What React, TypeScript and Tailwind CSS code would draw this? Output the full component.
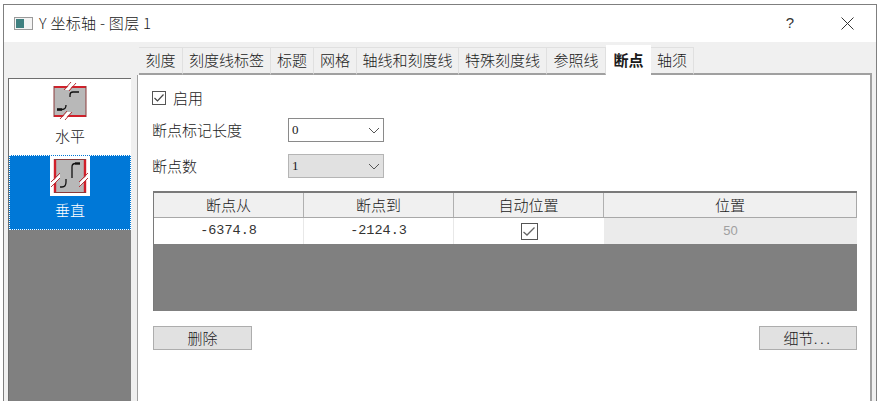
const cjk = "font-['Noto_Sans_CJK_SC',sans-serif]";

const tabs = [
  { label: '刻度', w: 'w-[44px]' },
  { label: '刻度线标签', w: 'w-[88px]' },
  { label: '标题', w: 'w-[43px]' },
  { label: '网格', w: 'w-[43px]' },
  { label: '轴线和刻度线', w: 'w-[102px]' },
  { label: '特殊刻度线', w: 'w-[88px]' },
  { label: '参照线', w: 'w-[59px]' },
];

const HorizontalIcon = () => (
  <svg width="40" height="40" viewBox="0 0 40 40" className="block">
    <rect x="4" y="5" width="32" height="31" fill="#b8b8b8" />
    <path d="M4 6H36M4 35H36" stroke="#d0202a" strokeWidth="2" />
    <path d="M4 5V36M36 5V36" stroke="#8a3a3a" strokeWidth="1" />
    {/* axis break on top and bottom edge */}
    <path d="M15 9L21 2L25 2L19 9Z" fill="#ffffff" />
    <path d="M11 38L17 31L21 31L15 38Z" fill="#ffffff" />
    <path d="M14 9L21 1M19 10L26 2M10 38L17 30M15 39L22 31" stroke="#b5343a" strokeWidth="1" fill="none" />
    <path d="M20 16V14C20 12 21 11 23 11H29" stroke="#111111" strokeWidth="1.3" fill="none" />
    <path d="M7 28.5H12C15 28.5 16 27 16 24" stroke="#111111" strokeWidth="1.3" fill="none" />
    <path d="M7 28.5H12" stroke="#111111" strokeWidth="2.5" fill="none" />
  </svg>
);

const VerticalIcon = () => (
  <svg width="40" height="40" viewBox="0 0 40 40" className="block">
    <rect x="4" y="3" width="32" height="34" fill="#b8b8b8" />
    <path d="M5 3V37M35 3V37" stroke="#d0202a" strokeWidth="2.4" />
    <path d="M4 3.5H36M4 36.5H36" stroke="#8a3a3a" strokeWidth="1" />
    {/* axis break on left and right edge */}
    <path d="M2 26L10 18L10 22L2 30Z" fill="#ffffff" />
    <path d="M30 26L38 18L38 22L30 30Z" fill="#ffffff" />
    <path d="M1 26L10 17M1 31L10 22M29 26L38 17M29 31L38 22" stroke="#b5343a" strokeWidth="1" fill="none" />
    <path d="M22 22V11C22 8.5 23.5 7.5 25.5 7.5H30" stroke="#111111" strokeWidth="1.3" fill="none" />
    <path d="M25 7.5H30" stroke="#111111" strokeWidth="2.2" fill="none" />
    <path d="M10 31H12C15 31 16 29 16 26V23" stroke="#111111" strokeWidth="1.3" fill="none" />
  </svg>
);

const Select = ({ value, disabled }: { value: string; disabled?: boolean }) => (
  <div
    className={`w-[96px] h-[24px] border flex items-center justify-between pl-[3px] pr-[3px] font-['Liberation_Serif',serif] text-[13px] ${
      disabled ? 'bg-[#e1e1e1] border-[#b5b5b5]' : 'bg-white border-[#8a8a8a]'
    }`}
  >
    <span>{value}</span>
    <svg width="12" height="7" viewBox="0 0 12 7" fill="none" stroke="#555555" strokeWidth="1">
      <path d="M1 1L6 6L11 1" />
    </svg>
  </div>
);

export default function App() {
  return (
    <div className={`w-[884px] h-[401px] overflow-hidden bg-white pl-[3px] pt-[4px] pr-[7px] text-[#1a1a1a] ${cjk}`}>
      <div className="h-[397px] border-l border-t border-r border-[#7f7f7f] flex flex-col">
        {/* title bar */}
        <div className="h-[37px] shrink-0 bg-white flex items-center pl-[10px]">
          <div className="w-[19px] h-[13px] border border-[#9a9a9a] bg-[#f4f4f4] pl-[1px] py-[1px] mr-[6px]">
            <div className="w-[8px] h-full bg-[#3f8080]" />
          </div>
          <span className="text-[15px] font-light tracking-[0.3px]">Y 坐标轴 - 图层 1</span>
          <span className="ml-auto text-[15px] font-['Liberation_Sans',sans-serif] mr-[47px] text-[#333333]">?</span>
          <svg width="13" height="13" viewBox="0 0 13 13" stroke="#333333" strokeWidth="1" className="mr-[22px]">
            <path d="M0.5 0.5L12.5 12.5M12.5 0.5L0.5 12.5" />
          </svg>
        </div>

        <div className="flex-1 min-h-0 bg-[#f0f0f0] flex pl-[4px] pr-[4px]">
          {/* left list */}
          <div className="w-[123px] shrink-0 mt-[36px] border-l border-t border-[#6e6e6e] flex flex-col bg-[#808080]">
            <div className="h-[76px] bg-white flex flex-col items-center pt-[2px]">
              <HorizontalIcon />
              <span className="text-[15px] font-light mt-[4px] leading-[22px]">水平</span>
            </div>
            <div className="h-[75px] bg-[#0078d7] border border-dotted border-white flex flex-col items-center">
              <div className="bg-white">
                <VerticalIcon />
              </div>
              <span className="text-[15px] font-light text-white mt-[3px] leading-[22px]">垂直</span>
            </div>
          </div>

          {/* tabs and page */}
          <div className="flex-1 min-w-0 ml-[6px] flex flex-col">
            <div className="h-[33px] shrink-0 flex items-end pl-[2px] relative z-10">
              {tabs.map(t => (
                <div
                  key={t.label}
                  className={`${t.w} h-[28px] flex items-center justify-center text-[15px] font-light border-r border-t border-[#e0e0e0] border-b-2 border-b-[#a0a0a0] whitespace-nowrap`}
                >
                  {t.label}
                </div>
              ))}
              <div className="w-[45px] h-[30px] bg-white flex items-center justify-center text-[15px] font-bold whitespace-nowrap">
                断点
              </div>
              <div className="w-[43px] h-[28px] flex items-center justify-center text-[15px] font-light border-r border-t border-[#e0e0e0] border-b-2 border-b-[#a0a0a0]">
                轴须
              </div>
              <div className="flex-1 h-[2px] bg-[#a0a0a0]" />
            </div>

            <div className="flex-1 min-h-0 bg-white border-l border-r-2 border-[#a0a0a0] pl-[14px] pr-[15px] pt-[15px]">
              <div className="flex items-center h-[16px] gap-[7px]">
                <div className="w-[14px] h-[14px] border border-[#555555] flex items-center justify-center">
                  <svg width="10" height="8" viewBox="0 0 10 8" fill="none" stroke="#444444" strokeWidth="1.2">
                    <path d="M0.5 4L3.5 7L9.5 0.5" />
                  </svg>
                </div>
                <span className="text-[15px] font-light">启用</span>
              </div>

              <div className="flex items-center mt-[12px] h-[24px]">
                <span className="w-[136px] text-[15px] font-light">断点标记长度</span>
                <Select value="0" />
              </div>
              <div className="flex items-center mt-[12px] h-[24px]">
                <span className="w-[136px] text-[15px] font-light">断点数</span>
                <Select value="1" disabled />
              </div>

              {/* table */}
              <div className="mt-[13px] ml-[1px] w-[704px] h-[120px] bg-[#808080] border-t-2 border-l border-[#7a7a7a] flex flex-col">
                <div className="h-[25px] shrink-0 bg-[#f0f0f0] border-b border-[#a8a8a8] flex text-[15px] font-light">
                  <div className="w-[150px] border-r border-[#b0b0b0] flex items-center justify-center">断点从</div>
                  <div className="w-[150px] border-r border-[#b0b0b0] flex items-center justify-center">断点到</div>
                  <div className="w-[150px] border-r border-[#b0b0b0] flex items-center justify-center">自动位置</div>
                  <div className="flex-1 border-r border-[#a8a8a8] flex items-center justify-center">位置</div>
                </div>
                <div className="h-[26px] shrink-0 flex bg-white text-[14px]">
                  <div className="w-[150px] border-r border-[#e8e8e8] flex items-center justify-center font-['Liberation_Mono',monospace] text-[13.5px] text-[#333333]">-6374.8</div>
                  <div className="w-[150px] border-r border-[#e8e8e8] flex items-center justify-center font-['Liberation_Mono',monospace] text-[13.5px] text-[#333333]">-2124.3</div>
                  <div className="w-[150px] flex items-center justify-center">
                    <div className="w-[17px] h-[17px] border border-[#555555] flex items-center justify-center">
                      <svg width="12" height="9" viewBox="0 0 12 9" fill="none" stroke="#666666" strokeWidth="1.3">
                        <path d="M0.5 5L4 8L11.5 0.5" />
                      </svg>
                    </div>
                  </div>
                  <div className="flex-1 bg-[#ebebeb] text-[#a0a0a0] text-[13px] flex items-center justify-center font-['Liberation_Sans',sans-serif]">50</div>
                </div>
              </div>

              <div className="mt-[15px] ml-[1px] w-[704px] flex justify-between">
                <button className="w-[99px] h-[24px] bg-[#e1e1e1] border border-[#adadad] text-[15px] font-light flex items-center justify-center">删除</button>
                <button className="w-[98px] h-[24px] bg-[#e1e1e1] border border-[#adadad] text-[15px] font-light flex items-center justify-center">
                  细节<span className="tracking-[2.5px]">...</span>
                </button>
              </div>
            </div>
          </div>
        </div>
      </div>
    </div>
  );
}
